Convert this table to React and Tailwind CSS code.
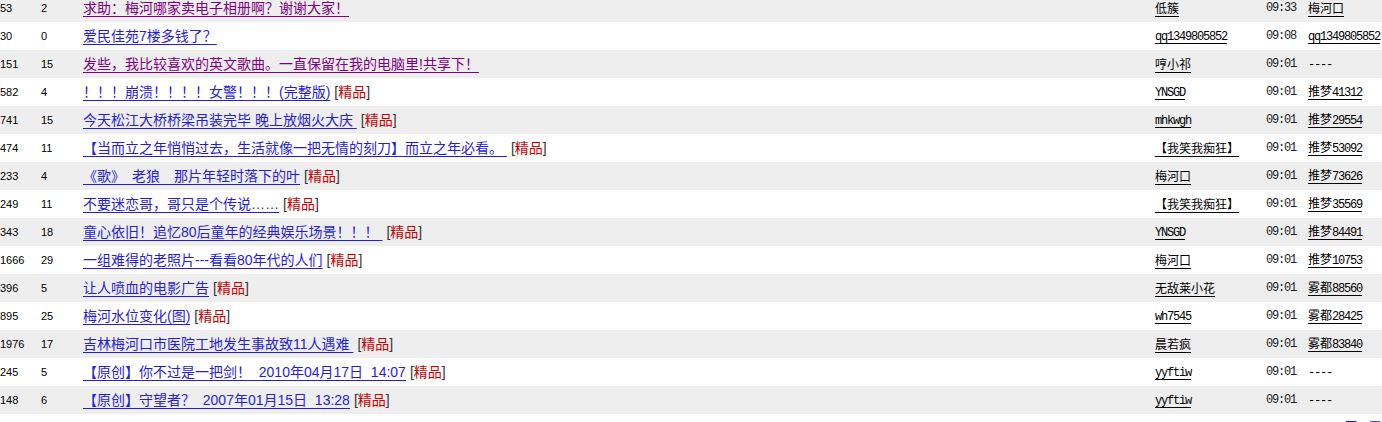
const rows = [
  { views: "53", replies: "2", title: "求助：梅河哪家卖电子相册啊？谢谢大家！", visited: true, author: "低簇", time: "09:33", last: "梅河口" },
  { views: "30", replies: "0", title: "爱民佳苑7楼多钱了？", author: "qq1349805852", time: "09:08", last: "qq1349805852" },
  { views: "151", replies: "15", title: "发些，我比较喜欢的英文歌曲。一直保留在我的电脑里!共享下！", visited: true, author: "哼小祁", time: "09:01", last: "----" },
  { views: "582", replies: "4", title: "！！！崩溃！！！！女警！！！(完整版)", good: true, author: "YNSGD", time: "09:01", last: "推梦41312" },
  { views: "741", replies: "15", title: "今天松江大桥桥梁吊装完毕 晚上放烟火大庆\u00a0", good: true, author: "mhkwgh", time: "09:01", last: "推梦29554" },
  { views: "474", replies: "11", title: "【当而立之年悄悄过去，生活就像一把无情的刻刀】而立之年必看。\u00a0", good: true, author: "【我笑我痴狂】", time: "09:01", last: "推梦53092" },
  { views: "233", replies: "4", title: "《歌》\u3000老狼\u3000那片年轻时落下的叶", good: true, author: "梅河口", time: "09:01", last: "推梦73626" },
  { views: "249", replies: "11", title: "不要迷恋哥，哥只是个传说……", good: true, author: "【我笑我痴狂】", time: "09:01", last: "推梦35569" },
  { views: "343", replies: "18", title: "童心依旧！追忆80后童年的经典娱乐场景！！！\u00a0", good: true, author: "YNSGD", time: "09:01", last: "推梦84491" },
  { views: "1666", replies: "29", title: "一组难得的老照片---看看80年代的人们", good: true, author: "梅河口", time: "09:01", last: "推梦10753" },
  { views: "396", replies: "5", title: "让人喷血的电影广告", good: true, author: "无敌莱小花", time: "09:01", last: "雾都88560" },
  { views: "895", replies: "25", title: "梅河水位变化(图)", good: true, author: "wh7545", time: "09:01", last: "雾都28425" },
  { views: "1976", replies: "17", title: "吉林梅河口市医院工地发生事故致11人遇难\u00a0", good: true, author: "晨若疯", time: "09:01", last: "雾都83840" },
  { views: "245", replies: "5", title: "【原创】你不过是一把剑！\u00a0\u00a02010年04月17日\u00a0\u00a014:07", good: true, author: "yyftiw", time: "09:01", last: "----" },
  { views: "148", replies: "6", title: "【原创】守望者？\u00a0\u00a02007年01月15日\u00a0\u00a013:28", good: true, author: "yyftiw", time: "09:01", last: "----" },
];

// latin runs in a narrow mono face, like SimSun half-width glyphs
function Mixed({ text }) {
  const parts = text.split(/([\u0000-\u007f]+)/).filter(Boolean);
  return parts.map((p, i) =>
    /^[\u0000-\u007f]+$/.test(p) ? (
      <span key={i} className="font-['Liberation_Mono',monospace] text-[12px] tracking-[-1.2px]">{p}</span>
    ) : (
      <span key={i}>{p}</span>
    )
  );
}

function Row({ r, i }) {
  return (
    <div className={`grid grid-cols-[41px_42px_1072px_111px_42px_1fr] h-[28px] items-center ${i % 2 === 0 ? "bg-[#eeeeee]" : "bg-white"}`}>
      <div className="text-[11px] font-['Liberation_Sans',sans-serif]">{r.views}</div>
      <div className="text-[11px] font-['Liberation_Sans',sans-serif]">{r.replies}</div>
      <div className="text-[14px] font-['Liberation_Sans','Noto_Sans_CJK_SC',sans-serif] whitespace-nowrap">
        <a href="#" className={`underline underline-offset-[3px] ${r.visited ? "text-[#800080]" : "text-[#261cdc]"}`}>{r.title}</a>
        {r.good && (
          <span className="ml-[4px] text-[#333]">
            [<span className="text-[#cc0000]">精品</span>]
          </span>
        )}
      </div>
      <div className="text-[12px] font-['Noto_Sans_CJK_SC',sans-serif] whitespace-nowrap">
        <a href="#" className="underline underline-offset-[3px] text-black">
          <Mixed text={r.author} />
        </a>
      </div>
      <div className="text-[12px] text-[#222] font-['Liberation_Mono',monospace] tracking-[-1.2px]">{r.time}</div>
      <div className="text-[12px] font-['Noto_Sans_CJK_SC',sans-serif] whitespace-nowrap">
        {r.last === "----" ? (
          <span className="font-['Liberation_Mono',monospace] tracking-[-1.2px]">----</span>
        ) : (
          <a href="#" className="underline underline-offset-[3px] text-black">
            <Mixed text={r.last} />
          </a>
        )}
      </div>
    </div>
  );
}

export default function App() {
  return (
    <div className="w-[1382px] h-[422px] overflow-hidden bg-white text-black">
      <div className="-mt-[6px]">
        {rows.map((r, i) => (
          <Row key={i} r={r} i={i} />
        ))}
        <div className="flex justify-end pr-[1px] pt-[3px] text-[12px] text-[#261cdc] font-['Noto_Sans_CJK_SC',sans-serif]">
          <span>下一页</span>
        </div>
      </div>
    </div>
  );
}
